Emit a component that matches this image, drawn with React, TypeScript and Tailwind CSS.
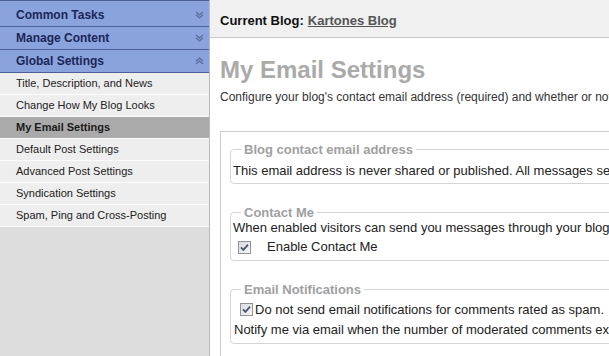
import React from "react";

const font = { fontFamily: '"Liberation Sans", Arial, sans-serif' };

function Chevron({ up }: { up?: boolean }) {
  return (
    <svg width="9" height="8" viewBox="0 0 9 8" className={up ? "rotate-180" : ""}>
      <polyline points="1,1 4.5,4 8,1" fill="none" stroke="#5d6f9e" strokeWidth="1.3" />
      <polyline points="1,3.8 4.5,6.8 8,3.8" fill="none" stroke="#5d6f9e" strokeWidth="1.3" />
    </svg>
  );
}

function Check() {
  return (
    <span className="flex h-[13px] w-[13px] shrink-0 items-center justify-center border border-[#8e939c] bg-gradient-to-br from-[#d9dbe0] to-[#f6f6f6]">
      <svg width="9" height="9" viewBox="0 0 9 9">
        <polyline points="1,4.3 3.4,6.8 8,1.6" fill="none" stroke="#4a5575" strokeWidth="1.8" />
      </svg>
    </span>
  );
}

const headers = [
  { label: "Common Tasks", first: true },
  { label: "Manage Content" },
  { label: "Global Settings", up: true },
];

const items = [
  "Title, Description, and News",
  "Change How My Blog Looks",
  "My Email Settings",
  "Default Post Settings",
  "Advanced Post Settings",
  "Syndication Settings",
  "Spam, Ping and Cross-Posting",
];

export default function App() {
  return (
    <div style={font} className="flex h-[356px] w-[609px] overflow-hidden bg-white text-[#222]">
      {/* Sidebar */}
      <aside className="flex h-full w-[210px] shrink-0 flex-col border-r border-[#b9b9b9] bg-[#dddddd]">
        {headers.map((h) => (
          <div
            key={h.label}
            className={`flex items-center justify-between border-t border-[#4e5f95] bg-[#8aa3dc] pl-[16px] pr-[5px] text-[12px] font-bold text-[#1b2757] ${
              h.first ? "h-[26px] pt-[3px]" : "h-[23px]"
            }`}
          >
            <span>{h.label}</span>
            <Chevron up={h.up} />
          </div>
        ))}
        <div className="flex flex-col border-t border-[#4e5f95]">
          {items.map((it) => {
            const sel = it === "My Email Settings";
            return (
              <div
                key={it}
                className={`flex h-[22px] items-center border-b border-[#fbfbfb] pl-[16px] text-[11px] ${
                  sel ? "bg-[#aaaaaa] font-bold text-[#1a1a1a]" : "bg-[#eeeeee] text-[#222]"
                }`}
              >
                {it}
              </div>
            );
          })}
        </div>
      </aside>

      {/* Main */}
      <main className="flex min-w-0 flex-1 flex-col overflow-hidden">
        <div className="flex h-[38px] w-[800px] shrink-0 items-center border-b border-[#c9c9c9] bg-[#f0f0f0] pl-[10px] pt-[4px] text-[13px] font-bold">
          <span className="text-[#111]">Current Blog:</span>
          <span className="ml-[4px] text-[#555] underline">Kartones Blog</span>
        </div>
        <div className="w-[800px] pl-[10px]">
          <h1 className="mt-[18px] text-[24px] font-bold leading-[28px] text-[#aaaaaa]">My Email Settings</h1>
          <p className="mt-[5px] whitespace-nowrap text-[12px] leading-[16px] text-[#333]">
            Configure your blog's contact email address (required) and whether or not you want to be notified.
          </p>
          <div className="mt-[26px] h-[300px] border-l border-t border-[#cccccc] pl-[9px] pt-[10px]">
            <fieldset className="rounded-[4px] border border-[#d4d4d4] px-[2px] pb-[5px]">
              <legend className="ml-[8px] px-[3px] text-[13px] font-bold leading-[15px] text-[#a0a0a0]">
                Blog contact email address
              </legend>
              <p className="mt-[6px] whitespace-nowrap text-[13px] leading-[15px]">
                This email address is never shared or published. All messages sent through your blog will be delivered here.
              </p>
            </fieldset>

            <fieldset className="mt-[21px] rounded-[4px] border border-[#d4d4d4] px-[2px] pb-[3px]">
              <legend className="ml-[8px] px-[3px] text-[13px] font-bold leading-[15px] text-[#a0a0a0]">
                Contact Me
              </legend>
              <p className="whitespace-nowrap text-[13px] leading-[15px]">
                When enabled visitors can send you messages through your blog using the contact form.
              </p>
              <div className="mt-[2px] flex h-[20px] items-center pl-[5px] text-[13px]">
                <Check />
                <span className="ml-[16px]">Enable Contact Me</span>
              </div>
            </fieldset>

            <fieldset className="mt-[21px] rounded-[4px] border border-[#d4d4d4] px-[2px] pb-[6px]">
              <legend className="ml-[8px] px-[3px] text-[13px] font-bold leading-[15px] text-[#a0a0a0]">
                Email Notifications
              </legend>
              <div className="mt-[4px] flex h-[17px] items-center whitespace-nowrap pl-[7px] text-[13px]">
                <Check />
                <span className="ml-[2px]">Do not send email notifications for comments rated as spam.</span>
              </div>
              <p className="mt-[4px] whitespace-nowrap pl-[1px] text-[13px] leading-[15px]">
                Notify me via email when the number of moderated comments exceeds the limit.
              </p>
            </fieldset>
          </div>
        </div>
      </main>
    </div>
  );
}
